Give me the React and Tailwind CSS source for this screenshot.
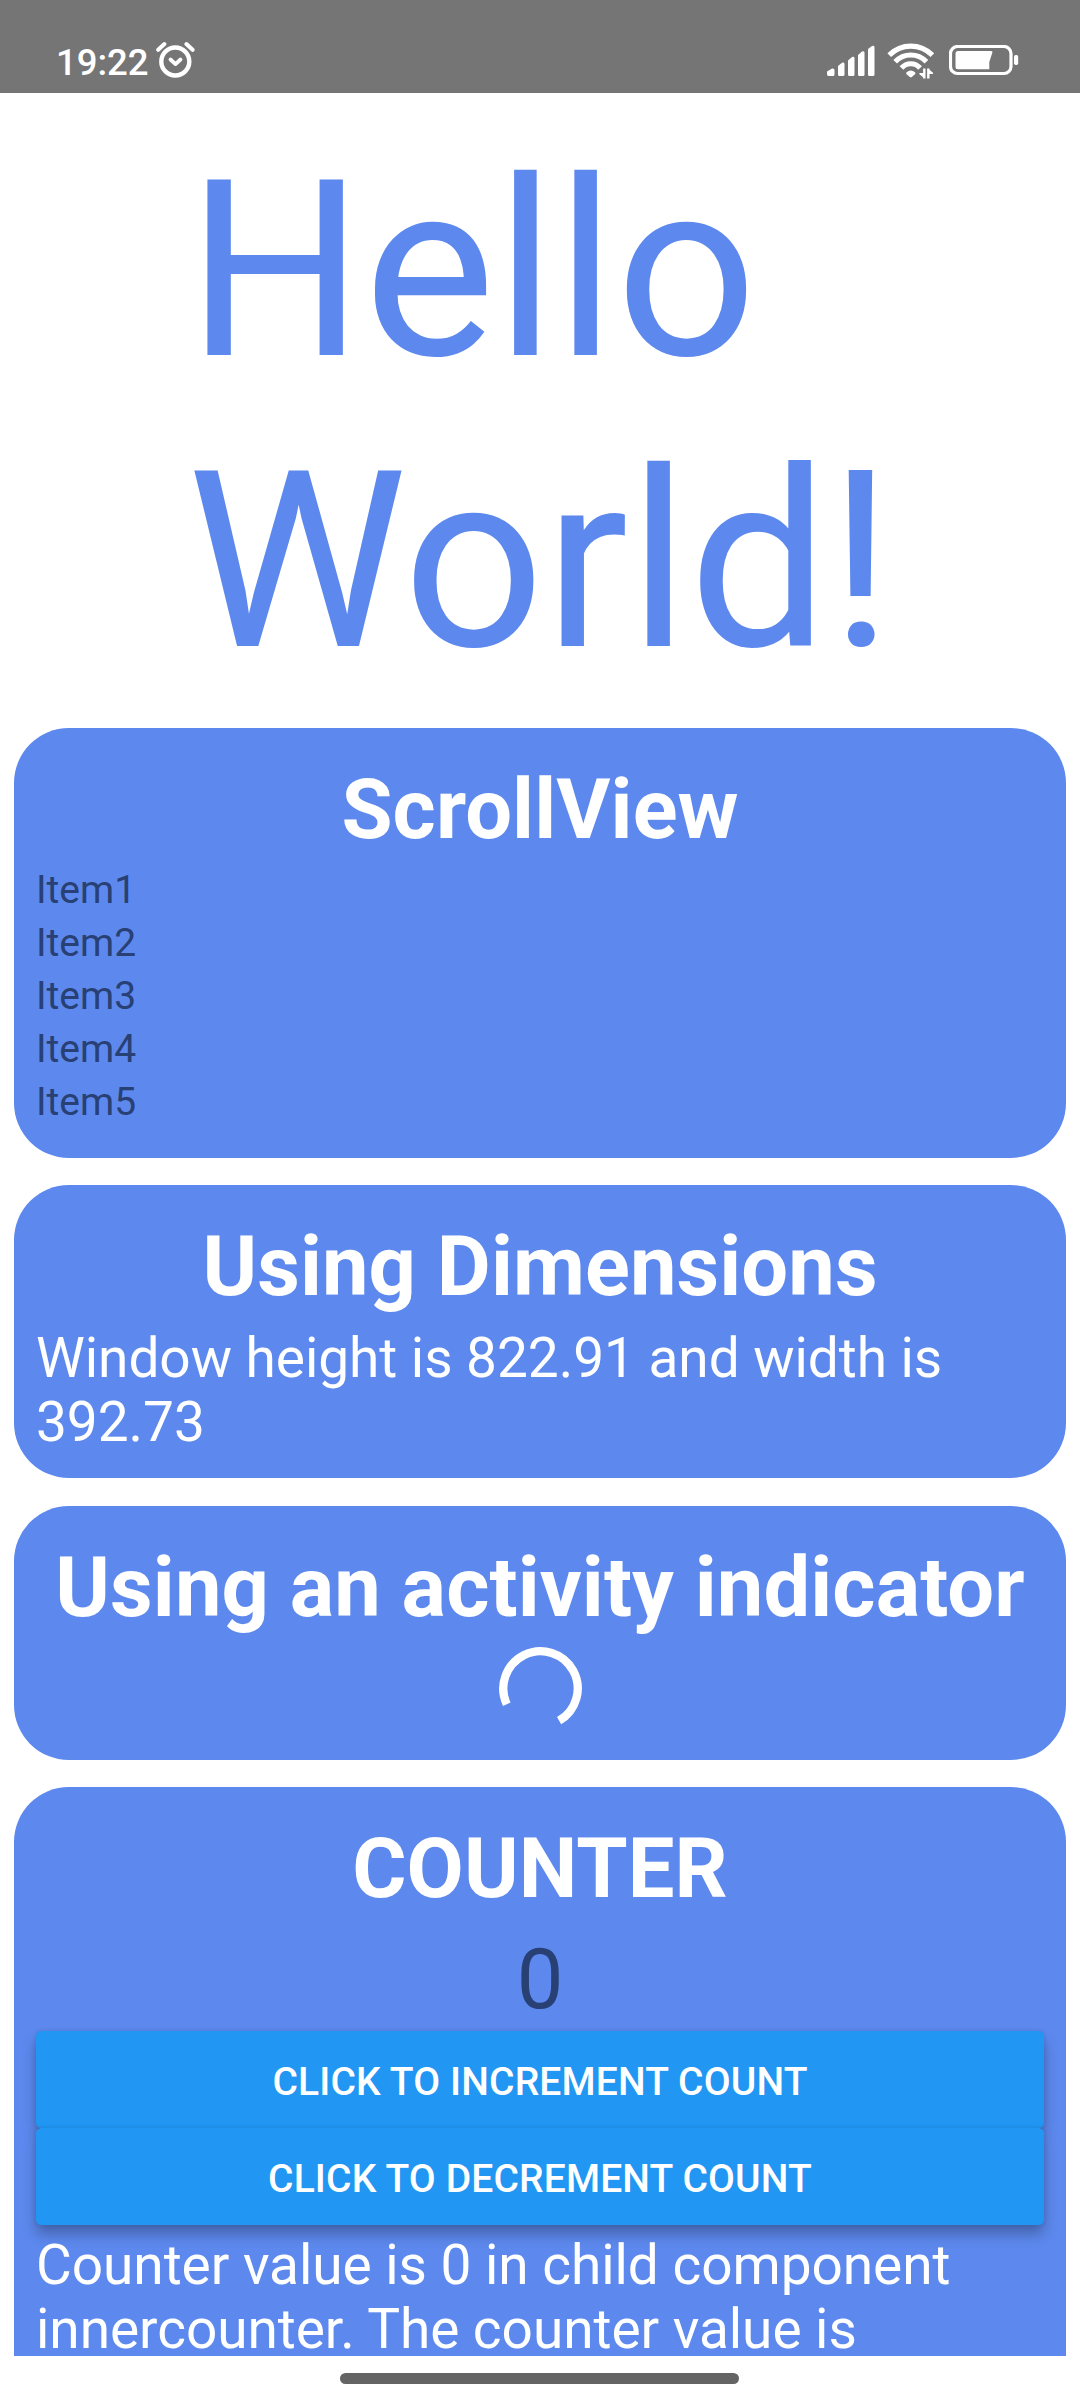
const Title = ({ children }) => (
  <h2 className="mt-[33px] h-[97px] whitespace-nowrap text-center text-[83px] font-bold leading-[97px] tracking-[0.1px] text-white">
    {children}
  </h2>
);

const Card = ({ className, children }) => (
  <section className={`shrink-0 overflow-hidden bg-[#5d89ee] px-[22px] ${className}`}>{children}</section>
);

const AlarmIcon = () => (
  <svg className="ml-[7px] h-[38px] w-10" viewBox="0 0 40 38" fill="none" stroke="#fff" strokeLinecap="round">
    <circle cx="20.3" cy="21.500" r="14" strokeWidth="4.400" />
    <path d="M3.200 9.800 9.400 4M37.600 9.800 31.400 4" strokeWidth="4" />
    <path d="m15.500 19.500 5 4.600 5-4.600" strokeWidth="3.800" strokeLinejoin="round" />
  </svg>
);

const SignalIcon = () => (
  <svg className="h-8 w-12" viewBox="0 0 48 32" fill="#fff">
    <path d="M0 29v-2.5L5 23.5Q7.5 23 7.5 25v4.5q0 1.5-1.5 1.5H1.500Q0 31 0 29ZM11 29.500V21l4-3.300q2.500-.7 2.500 1.300v10.500q0 1.500-1.500 1.500h-3.500q-1.500 0-1.500-1.500ZM21 29.500V15.500l4-3.500q2.500-.7 2.500 1.300v16.200q0 1.500-1.500 1.500h-3.500q-1.500 0-1.500-1.500ZM31 29.500V10l4-3.500q2.500-.7 2.500 1.300v21.700q0 1.500-1.500 1.500h-3.500q-1.500 0-1.500-1.500ZM41 29.500V4l4-3q2.500-.7 2.500 1.300v27.200q0 1.500-1.500 1.500h-3.500q-1.500 0-1.500-1.500Z" />
  </svg>
);

const WifiIcon = () => (
  <svg className="ml-3 h-9 w-12" viewBox="0 0 48 36" fill="none" stroke="#fff">
    <path d="M2.200 12.200Q11.500 3.200 23.800 3.200T45.400 12.200" strokeWidth="5.200" />
    <path d="M8.200 18.700Q14.800 12 23.800 12T39.400 18.700" strokeWidth="5.200" />
    <path d="M14.500 25Q18.200 20.700 23.800 20.700T33.100 25" strokeWidth="5" />
    <path d="M19.300 29.500Q23.800 25.600 28.300 29.500V31L24.800 34Q23.800 34.800 22.800 34L19.300 31Z" fill="#fff" stroke="none" />
    <path d="M37.300 25.500v10M41.300 35.500v-10" strokeWidth="2.400" />
    <path d="M37.300 35.200 32.400 31.200V30h4.900ZM41.300 25.800 46 29.800V31h-4.700Z" fill="#fff" stroke="none" />
  </svg>
);

const BatteryIcon = () => (
  <svg className="ml-[14px] h-[31px] w-[70px]" viewBox="0 0 70 31" fill="none">
    <rect x="1.500" y="1.500" width="60.500" height="27" rx="7" stroke="#fff" strokeWidth="3.200" />
    <path d="M9 6h33q2 0 1.400 1.500L40.300 17v7.300H9q-2.500 0-2.500-2.500V8.500Q6.500 6 9 6Z" fill="#fff" />
    <rect x="65" y="10" width="4.200" height="10" rx="1.700" fill="#fff" />
  </svg>
);

const ActionButton = ({ children }) => (
  <button className="block h-[97px] w-full rounded-[5.5px] bg-[#2196f3] pt-[2px] text-center text-[39px] font-medium leading-[99px] tracking-[0.15px] text-white shadow-[0_9px_14px_rgba(0,0,0,0.28),0_0_4px_rgba(0,0,0,0.1)]">
    {children}
  </button>
);

export default function App() {
  return (
    <div className="flex h-[2400px] w-[1080px] flex-col overflow-hidden bg-white font-['Roboto',sans-serif]">
      <header className="flex h-[93px] shrink-0 items-start bg-[#757575] text-white">
        <div className="ml-[56px] mt-[40px] flex items-start">
          <span className="w-[92px] whitespace-nowrap text-[36.5px] font-medium leading-[46px]">19:22</span>
          <AlarmIcon />
        </div>
        <div className="ml-auto mr-[61px] mt-[45px] flex items-start">
          <SignalIcon />
          <div className="mt-[-2px]">
            <WifiIcon />
          </div>
          <BatteryIcon />
        </div>
      </header>

      <main className="flex h-[2263px] shrink-0 flex-col gap-[27px] overflow-hidden px-[14px]">
        <h1 className="ml-[173px] mt-[32px] h-[576px] shrink-0 whitespace-nowrap text-[247.8px] leading-[291px] text-[#5d89ee]">
          Hello
          <br />
          World!
        </h1>

        <Card className="h-[430px] rounded-[55px]">
          <Title>ScrollView</Title>
          <ul className="mt-[6px] text-[39px] leading-[53px] text-[#284074]">
            <li>Item1</li>
            <li>Item2</li>
            <li>Item3</li>
            <li>Item4</li>
            <li>Item5</li>
          </ul>
        </Card>

        <Card className="h-[293px] rounded-[55px]">
          <Title>Using Dimensions</Title>
          <p className="mt-[11px] whitespace-nowrap text-[55px] leading-[64px] tracking-[-0.05px] text-white">
            Window height is 822.91 and width is
            <br />
            392.73
          </p>
        </Card>

        <Card className="mt-px h-[254px] rounded-[55px]">
          <Title>Using an activity indicator</Title>
          <svg className="mx-auto mt-[3px] h-[99px] w-[99px]" viewBox="-49.5 -49.5 99 99" fill="none">
            <path d="M-33.700 15.700A37.200 37.200 0 1 1 18.600 32.200" stroke="#fff" strokeWidth="8.300" />
          </svg>
        </Card>

        <Card className="h-[569px] rounded-t-[55px]">
          <Title>COUNTER</Title>
          <div className="mt-[14px] h-[100px] text-center text-[83px] leading-[97px] text-[#284074]">0</div>
          <ActionButton>CLICK TO INCREMENT COUNT</ActionButton>
          <ActionButton>CLICK TO DECREMENT COUNT</ActionButton>
          <p className="relative mt-2 whitespace-nowrap text-[55px] leading-[64px] tracking-[-0.05px] text-white">
            Counter value is 0 in child component
            <br />
            innercounter. The counter value is
          </p>
        </Card>
      </main>

      <footer className="flex h-11 shrink-0 justify-center pt-[17px]">
        <div className="mr-px h-[11px] w-[399px] rounded-full bg-[#646464]" />
      </footer>
    </div>
  );
}
